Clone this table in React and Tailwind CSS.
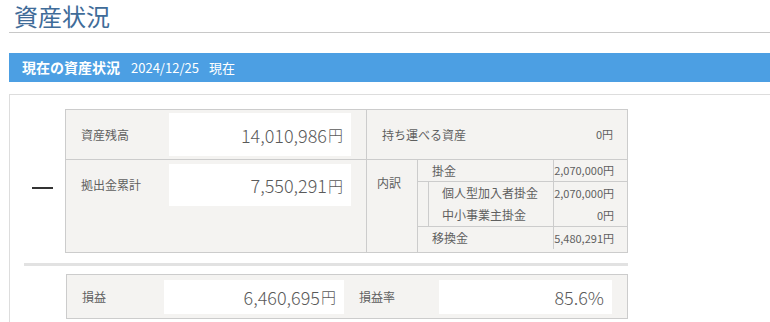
import React from 'react';

const jp = { fontFamily: '"Noto Sans CJK JP", "Noto Sans", sans-serif' };

const ValueBox = ({ width, height, children, unit }) => (
  <div
    className={`${width} ${height} bg-white flex items-center justify-end pr-[8px] text-[#5a5a5a] font-light`}
  >
    <span className="text-[18px] leading-none">{children}</span>
    {unit && <span className="text-[15px] leading-none ml-[1px]">{unit}</span>}
  </div>
);

const SubRow = ({ label, value, labelPad = 'pl-[14px]', border = '' }) => (
  <div className={`flex h-[22px] items-center ${border}`}>
    <div className={`flex-1 ${labelPad} text-[12px]`}>{label}</div>
    <div className="w-[74px] h-full border-l border-[#cccccc] flex items-center justify-end pr-[13px] text-[11px]">
      {value}
    </div>
  </div>
);

const App = () => {
  return (
    <div className="w-[770px] h-[322px] overflow-hidden bg-white pl-[9px] text-[#5f5f5f]" style={jp}>
      <h1 className="h-[33px] border-b border-[#c8c8c8] pl-[5px] text-[24px] leading-[31px] text-[#3f6c99]">
        資産状況
      </h1>

      <div className="mt-[20px] h-[29px] bg-[#4c9fe3] flex items-center pl-[13px] text-white">
        <span className="text-[14px] font-bold">現在の資産状況</span>
        <span className="text-[13px] ml-[11px]">2024/12/25</span>
        <span className="text-[13px] ml-[10px]">現在</span>
      </div>

      <div className="mt-[12px] border-l border-t border-[#dddddd] pl-[14px] pt-[14px] h-[240px]">
        <div className="flex">
          <div className="w-[41px] pt-[78px]">
            <div className="ml-[8px] w-[21px] h-[2px] bg-[#333]" />
          </div>

          <div className="w-[563px] h-[144px] border border-[#cccccc] bg-[#f4f3f1] flex">
            {/* 残高と拠出金 */}
            <div className="w-[301px] border-r border-[#cccccc] flex flex-col">
              <div className="h-[50px] flex items-center border-b border-[#cccccc]">
                <div className="w-[103px] pl-[15px] text-[12px]">資産残高</div>
                <ValueBox width="w-[182px]" height="h-[43px]" unit="円">14,010,986</ValueBox>
              </div>
              <div className="flex items-start pt-[4px]">
                <div className="w-[103px] pl-[15px] h-[42px] flex items-center text-[12px]">拠出金累計</div>
                <ValueBox width="w-[182px]" height="h-[42px]" unit="円">7,550,291</ValueBox>
              </div>
            </div>

            {/* ポータブル資産と内訳 */}
            <div className="flex-1 flex flex-col">
              <div className="h-[50px] flex items-center justify-between border-b border-[#cccccc] pl-[15px] pr-[14px]">
                <span className="text-[12px]">持ち運べる資産</span>
                <span className="text-[11px]">0円</span>
              </div>
              <div className="flex flex-1">
                <div className="w-[51px] border-r border-[#cccccc] pl-[10px] pt-[14px] text-[12px]">内訳</div>
                <div className="flex-1 flex flex-col">
                  <SubRow label="掛金" value="2,070,000円" border="border-b border-[#cccccc]" />
                  <div className="flex h-[44px]">
                    <div className="w-[10px]" />
                    <div className="flex-1 border-l border-[#cccccc]">
                      <SubRow label="個人型加入者掛金" value="2,070,000円" labelPad="pl-[13px]" />
                      <SubRow label="中小事業主掛金" value="0円" labelPad="pl-[13px]" />
                    </div>
                  </div>
                  <SubRow label="移換金" value="5,480,291円" border="border-t border-[#cccccc] h-[23px]" />
                </div>
              </div>
            </div>
          </div>
        </div>

        <div className="mt-[10px] w-[604px] h-[3px] bg-[#e2e2e2]" />

        <div className="mt-[8px] ml-[42px] w-[562px] h-[45px] border border-[#cccccc] bg-[#f4f3f1] flex items-center">
          <div className="w-[97px] pl-[15px] text-[12px]">損益</div>
          <ValueBox width="w-[180px]" height="h-[34px]" unit="円">6,460,695</ValueBox>
          <div className="w-[95px] pl-[15px] text-[12px]">損益率</div>
          <ValueBox width="w-[173px]" height="h-[34px]">85.6%</ValueBox>
        </div>
      </div>
    </div>
  );
};

export default App;
